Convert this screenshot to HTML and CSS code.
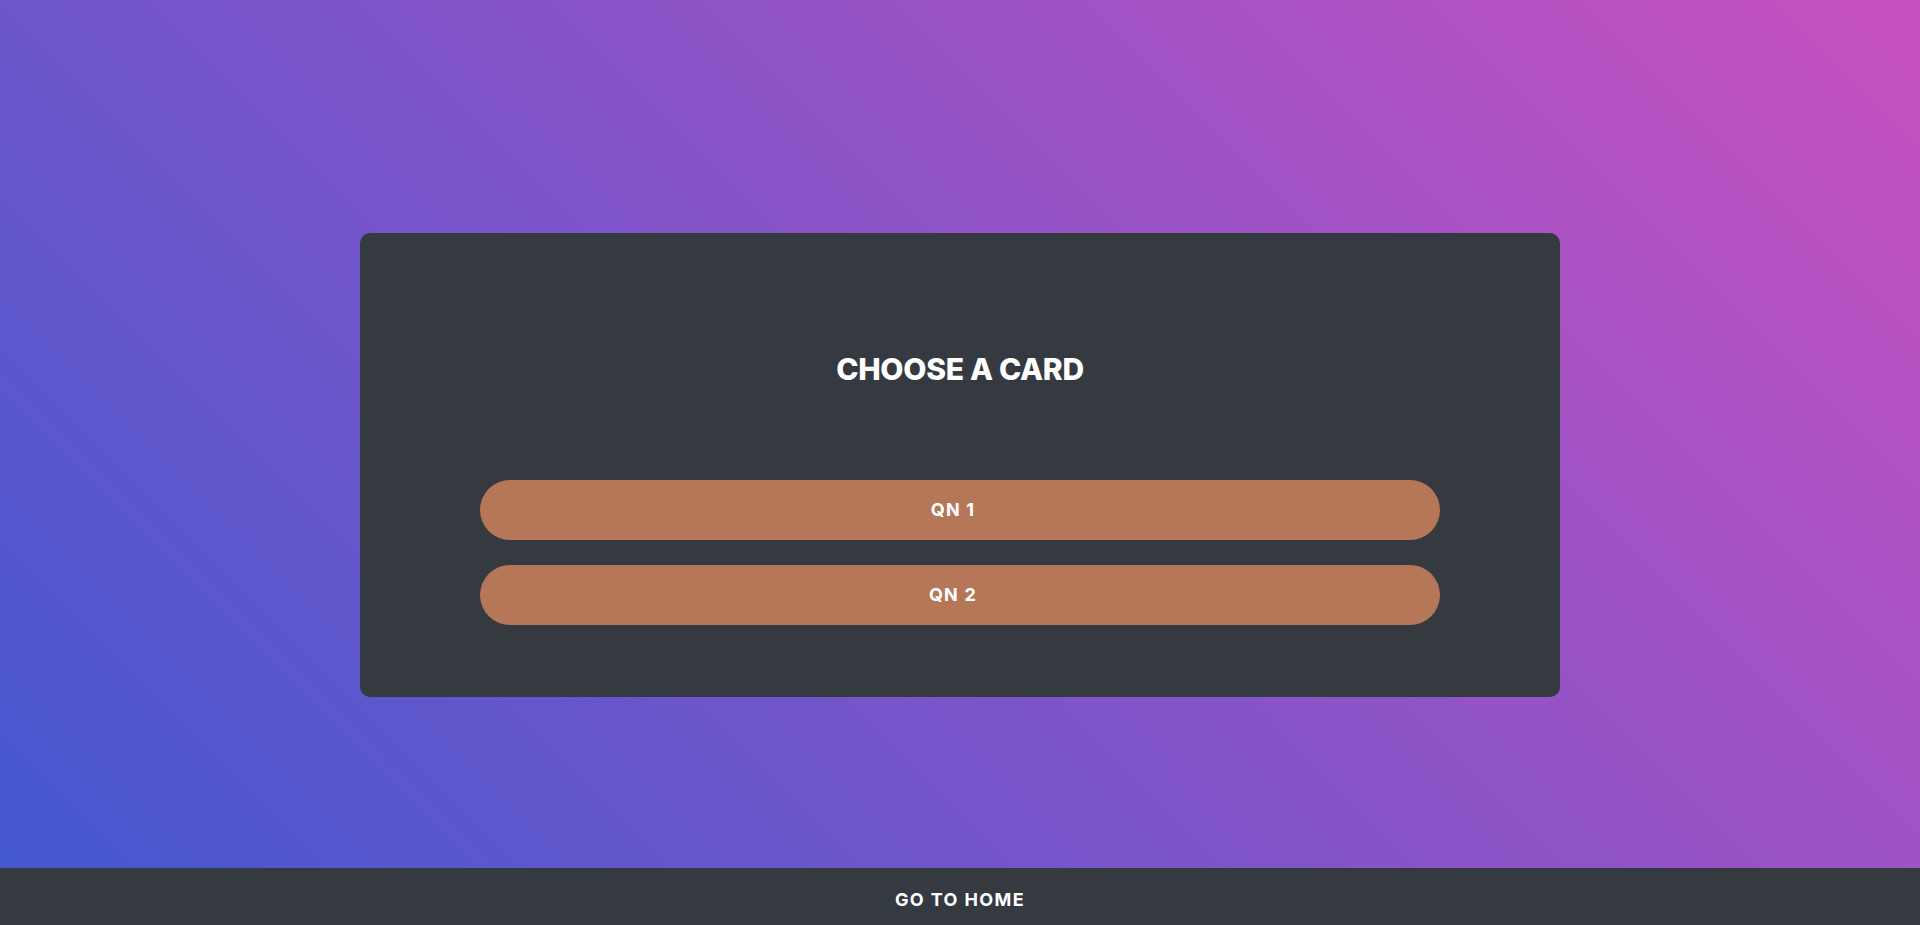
FILE: index.html
```html
<!DOCTYPE html>
<html lang="en">
<head>
<meta charset="utf-8">
<title>Choose a card</title>
<link rel="stylesheet" href="styles.css">
</head>
<body>
<main class="page">
  <section class="card">
    <h1 class="card-title">CHOOSE A CARD</h1>
    <div class="choices">
      <button class="choice">QN 1</button>
      <button class="choice">QN 2</button>
    </div>
  </section>
</main>
<footer class="footer">
  <a class="footer-link" href="#">GO TO HOME</a>
</footer>
</body>
</html>
```
FILE: styles.css
```css
* { box-sizing: border-box; }
html, body { margin: 0; padding: 0; }
body {
  min-height: 100vh;
  background: linear-gradient(45deg, #4158d0 0%, #c850c0 100%);
  font-family: Inter, "Open Sans", sans-serif;
  color: #fff;
}
.page {
  height: 100vh;
  display: flex;
  align-items: center;
  justify-content: center;
  padding-top: 5px;
}
.card {
  width: 1200px;
  height: 464px;
  background: #343a40;
  border-radius: 10px;
  display: flex;
  flex-direction: column;
  align-items: center;
  padding-top: 112px;
}
.card-title {
  margin: 0;
  font-family: Inter, sans-serif;
  font-weight: 800;
  font-size: 30px;
  line-height: 48px;
  letter-spacing: -0.3px;
}
.choices {
  margin-top: 87px;
  width: 80%;
  display: flex;
  flex-direction: column;
  gap: 25px;
}
.choice {
  height: 60px;
  border: none;
  border-radius: 30px;
  background: #b57758;
  color: #fff;
  font-family: Inter, sans-serif;
  font-weight: 700;
  font-size: 18px;
  letter-spacing: 1.2px;
  padding: 0 14px 2px 0;
  cursor: pointer;
}
.footer {
  position: fixed;
  left: 0;
  right: 0;
  bottom: 0;
  height: 57px;
  background: #343a40;
  display: flex;
  align-items: center;
  justify-content: center;
  padding-top: 5px;
}
.footer-link {
  color: #fff;
  text-decoration: none;
  font-family: Inter, sans-serif;
  font-weight: 700;
  font-size: 18px;
  letter-spacing: 1.4px;
}
```
